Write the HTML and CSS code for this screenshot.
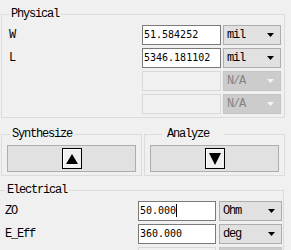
FILE: index.html
```html
<!DOCTYPE html>
<html lang="en">
<head>
    <meta charset="UTF-8">
    <title>Transmission Line Calculator</title>
    <link rel="stylesheet" href="styles.css">
</head>
<body>
    <fieldset class="group physical">
        <legend>Physical</legend>
        <div class="row">
            <span class="label">W</span>
            <div class="field">51.584252</div>
            <div class="combo"><span>mil</span><svg class="arrow" width="7" height="4" viewBox="0 0 7 4"><polygon points="0,0 7,0 3.5,4"/></svg></div>
        </div>
        <div class="row">
            <span class="label">L</span>
            <div class="field">5346.181102</div>
            <div class="combo"><span>mil</span><svg class="arrow" width="7" height="4" viewBox="0 0 7 4"><polygon points="0,0 7,0 3.5,4"/></svg></div>
        </div>
        <div class="row">
            <span class="label"></span>
            <div class="field disabled"></div>
            <div class="combo disabled"><span>N/A</span><svg class="arrow" width="7" height="4" viewBox="0 0 7 4"><polygon points="0,0 7,0 3.5,4"/></svg></div>
        </div>
        <div class="row">
            <span class="label"></span>
            <div class="field disabled"></div>
            <div class="combo disabled"><span>N/A</span><svg class="arrow" width="7" height="4" viewBox="0 0 7 4"><polygon points="0,0 7,0 3.5,4"/></svg></div>
        </div>
    </fieldset>

    <div class="actions">
        <fieldset class="group action synth">
            <legend>Synthesize</legend>
            <button class="big-btn">
                <span class="icon-box"><svg width="12" height="10" viewBox="0 0 12 10"><polygon points="6,0 12,10 0,10"/></svg></span>
            </button>
        </fieldset>
        <fieldset class="group action analyze">
            <legend>Analyze</legend>
            <button class="big-btn">
                <span class="icon-box"><svg width="12" height="12" viewBox="0 0 12 12"><polygon points="0,0 12,0 6,12"/></svg></span>
            </button>
        </fieldset>
    </div>

    <fieldset class="group electrical">
        <legend>Electrical</legend>
        <div class="row">
            <span class="label">ZO</span>
            <div class="field">50.000<span class="caret"></span></div>
            <div class="combo"><span>Ohm</span><svg class="arrow" width="7" height="4" viewBox="0 0 7 4"><polygon points="0,0 7,0 3.5,4"/></svg></div>
        </div>
        <div class="row">
            <span class="label">E_Eff</span>
            <div class="field">360.000</div>
            <div class="combo"><span>deg</span><svg class="arrow" width="7" height="4" viewBox="0 0 7 4"><polygon points="0,0 7,0 3.5,4"/></svg></div>
        </div>
        <div class="row">
            <span class="label"></span>
            <div class="field disabled"></div>
            <div class="combo disabled"><span></span></div>
        </div>
    </fieldset>
</body>
</html>
```

FILE: styles.css
```css
body {
    margin: 0;
    width: 291px;
    height: 250px;
    overflow: hidden;
    background: #f0f0f0;
    font-family: "Liberation Mono", monospace;
    font-size: 12px;
    letter-spacing: -1.2px;
    color: #000;
}
.group {
    box-sizing: border-box;
    border: 1px solid #dcdcdc;
    margin: 0;
    min-width: 0;
}
.group legend {
    line-height: 12px;
    padding: 0 2px;
}
.physical {
    margin: 8px 0 0 1px;
    width: 284px;
    padding: 5px 3px 3px 7px;
}
.row {
    display: flex;
    align-items: center;
    height: 20px;
    margin-bottom: 3px;
}
.row:last-child {
    margin-bottom: 0;
}
.label {
    flex: 1;
}
.field {
    box-sizing: border-box;
    width: 79px;
    height: 20px;
    border: 1px solid #7a7a7a;
    background: #fff;
    padding-left: 1px;
    font-family: "DejaVu Sans Mono", monospace;
    font-size: 10px;
    letter-spacing: 0;
    line-height: 18px;
    white-space: nowrap;
    overflow: hidden;
}
.field.disabled {
    border-color: #d9d9d9;
    background: #f0f0f0;
}
.caret {
    display: inline-block;
    width: 1px;
    height: 13px;
    background: #000;
    vertical-align: -3px;
}
.combo {
    box-sizing: border-box;
    display: flex;
    align-items: center;
    justify-content: space-between;
    width: 58px;
    height: 20px;
    margin-left: 2px;
    padding: 0 6px 0 3px;
    border: 1px solid #adadad;
    background: #e1e1e1;
}
.combo .arrow {
    fill: #000;
}
.combo.disabled {
    border-color: #c4c4c4;
    background: #cccccc;
    color: #838383;
}
.combo.disabled .arrow {
    fill: #f4f4f4;
}
.actions {
    display: flex;
    gap: 2px;
    margin: 10px 0 0 1px;
}
.action {
    width: 141px;
    padding: 5px 5px 3px 5px;
}
.synth legend {
    margin-left: 3px;
}
.analyze legend {
    margin-left: 12px;
    padding: 0 15px 0 5px;
}
.big-btn {
    display: flex;
    align-items: center;
    justify-content: center;
    width: 100%;
    height: 27px;
    margin: 0;
    padding: 0;
    border: 1px solid #adadad;
    background: #e1e1e1;
}
.icon-box {
    box-sizing: border-box;
    display: flex;
    align-items: center;
    justify-content: center;
    width: 20px;
    height: 21px;
    border: 1px solid #000;
    box-shadow: inset 1px 1px #fff;
    background: #f0f0f0;
}
.icon-box svg {
    fill: #000;
}
.electrical {
    margin: 8px 0 0 -2px;
    width: 286px;
    padding: 5px 1px 3px 6px;
}
.electrical .field {
    width: 78px;
}
.electrical .combo {
    width: 63px;
    margin-left: 3px;
}
```
